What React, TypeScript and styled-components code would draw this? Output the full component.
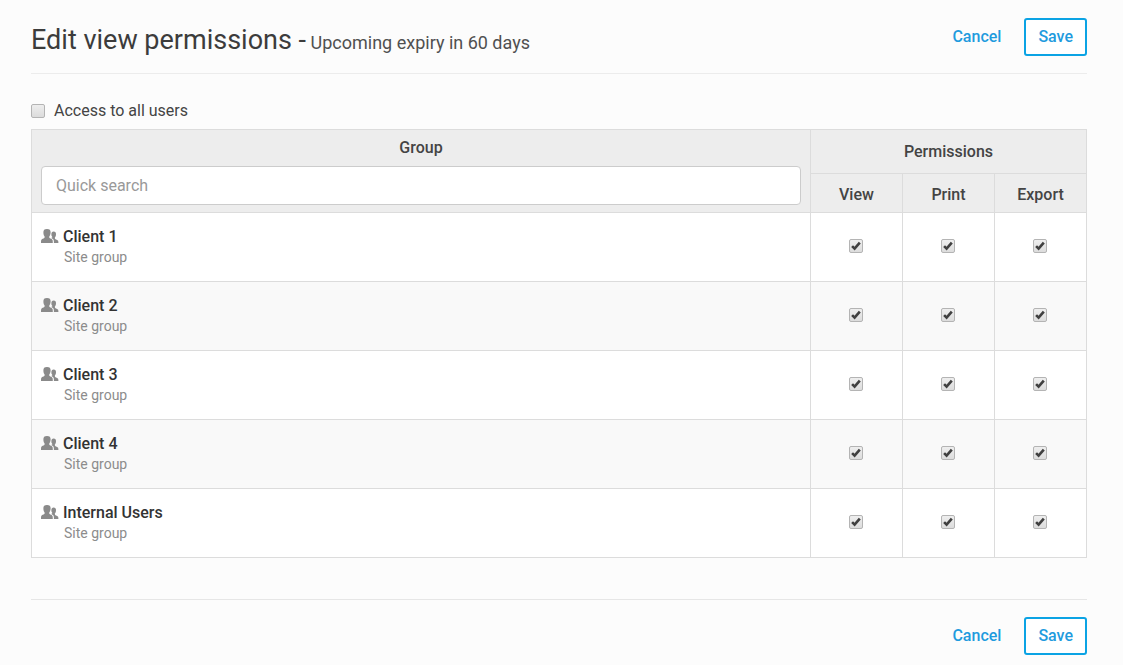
import React, { useState } from "react";
import styled, { createGlobalStyle } from "styled-components";

const GlobalStyle = createGlobalStyle`
  *, *::before, *::after { box-sizing: border-box; }
  body {
    margin: 0;
    background: #fcfcfc;
    color: #444;
    font-family: Roboto, "Liberation Sans", sans-serif;
    font-size: 16px;
    line-height: 20px;
  }
`;

const Page = styled.main`
  padding: 18px 36px 10px 31px;
`;

const Header = styled.header`
  display: flex;
  align-items: flex-start;
  justify-content: space-between;
  height: 56px;
  border-bottom: 1px solid #ececec;
`;

const Title = styled.h1`
  margin: 0;
  padding-top: 4px;
  font-size: 27px;
  line-height: 36px;
  font-weight: 400;
  color: #3c3c3c;
`;

const Subtitle = styled.small`
  font-size: 18px;
  color: #505050;
`;

const Actions = styled.div`
  display: flex;
  align-items: center;
  gap: 23px;
`;

const CancelLink = styled.a`
  color: #1f9bde;
  font-weight: 500;
  text-decoration: none;
`;

const SaveButton = styled.button`
  height: 38px;
  padding: 0 12px;
  border: 2px solid #0ba3e4;
  border-radius: 3px;
  background: #fff;
  color: #1f9bde;
  font: inherit;
  font-weight: 500;
  cursor: pointer;
`;

const AccessLabel = styled.label`
  display: flex;
  align-items: center;
  gap: 9px;
  padding: 27px 0 8px;
`;

const Checkbox = styled.input.attrs({ type: "checkbox" })`
  appearance: none;
  display: block;
  flex: none;
  width: 14px;
  height: 14px;
  margin: 0;
  border: 1px solid #b4b4b4;
  border-radius: 2px;
  background: linear-gradient(#eeeeee, #dcdcdc);

  &:checked {
    background:
      url("data:image/svg+xml,%3Csvg xmlns='http://www.w3.org/2000/svg' viewBox='0 0 12 12'%3E%3Cpath d='M2.1 6.2L4.6 8.7L9.8 2.6' fill='none' stroke='%23404040' stroke-width='2.6'/%3E%3C/svg%3E")
        center / 12px 12px no-repeat,
      linear-gradient(#eeeeee, #dcdcdc);
  }
`;

const Table = styled.table`
  width: 100%;
  table-layout: fixed;
  border-collapse: collapse;
  background: #fff;
`;

const PermissionCol = styled.col`
  width: 92px;
`;

const HeadCell = styled.th`
  padding: 4px 0 0;
  border: 1px solid #dcdcdc;
  background: #ededed;
  font-weight: 500;
`;

const GroupHead = styled(HeadCell)`
  padding: 8px 9px 7px;
  vertical-align: top;
`;

const PermissionsHead = styled(HeadCell)`
  height: 44px;
  padding: 0;
`;

const Search = styled.input`
  display: block;
  width: 100%;
  height: 39px;
  margin-top: 8px;
  padding: 0 14px;
  border: 1px solid #cccccc;
  border-radius: 4px;
  background: #fff;
  font: inherit;
  font-weight: 400;
  color: #444;

  &::placeholder {
    color: #999;
    opacity: 1;
  }
`;

const Row = styled.tr`
  height: 69px;

  &:nth-child(even) {
    background: #f9f9f9;
  }
`;

const Cell = styled.td`
  padding: 0 9px;
  border: 1px solid #dcdcdc;
`;

const Group = styled.div`
  display: grid;
  grid-template-columns: 18px 1fr;
  column-gap: 4px;
  align-items: center;
`;

const GroupName = styled.span`
  font-weight: 500;
  color: #333;
`;

const GroupKind = styled.span`
  grid-column: 2;
  padding-left: 1px;
  font-size: 14px;
  color: #8c8c8c;
`;

const CheckWrap = styled.div`
  display: flex;
  justify-content: center;
  padding-bottom: 2px;
`;

const Footer = styled.footer`
  display: flex;
  justify-content: flex-end;
  margin-top: 41px;
  padding-top: 17px;
  border-top: 1px solid #e6e6e6;
`;

const UsersIcon = () => (
  <svg width="18" height="16" viewBox="0 1 18 16" fill="#8a8a8a" aria-hidden="true">
    <path d="M6 1C8.7 1 9.7 2.2 9.6 4.4C9.55 6 9.2 7.1 8.5 8C8.2 8.5 8.2 9.7 8.6 10.1C9.4 10.7 11 11.1 11.5 12C11.8 12.7 11.8 14 11.8 15H0C0 14 0 12.7 0.3 12C0.8 11.1 2.4 10.7 3.3 10.1C3.7 9.7 3.7 8.5 3.4 8C2.7 7.1 2.4 6 2.4 4.4C2.3 2.2 3.3 1 6 1Z" />
    <path d="M12.6 3.4C14.3 3.4 15.1 4.4 15 6.2C14.95 7.5 14.7 8.5 14 9.2C13.7 9.6 13.8 10.5 14.2 10.9C15 11.5 16.6 11.9 17.1 12.8C17.4 13.4 17.4 14.3 17.4 15H12.9C12.9 13.5 12.9 12.4 12.4 11.6C12 10.9 11 10.5 10.1 10C11.1 9.6 11.6 9.3 11.2 8.7C10.5 8 10.3 7.3 10.4 6.4C10.3 4.4 11.1 3.4 12.6 3.4Z" />
  </svg>
);

const groups = ["Client 1", "Client 2", "Client 3", "Client 4", "Internal Users"];
const permissions = ["View", "Print", "Export"];

const FormActions = () => (
  <Actions>
    <CancelLink href="#cancel">Cancel</CancelLink>
    <SaveButton type="button">Save</SaveButton>
  </Actions>
);

export default function App() {
  const [query, setQuery] = useState("");
  const shown = groups.filter((g) => g.toLowerCase().includes(query.toLowerCase()));

  return (
    <>
      <GlobalStyle />
      <Page>
        <Header>
          <Title>
            Edit view permissions -<Subtitle> Upcoming expiry in 60 days</Subtitle>
          </Title>
          <FormActions />
        </Header>

        <AccessLabel>
          <Checkbox />
          Access to all users
        </AccessLabel>

        <Table>
          <colgroup>
            <col />
            {permissions.map((p) => (
              <PermissionCol key={p} />
            ))}
          </colgroup>
          <thead>
            <tr>
              <GroupHead rowSpan={2} scope="col">
                Group
                <Search
                  type="text"
                  placeholder="Quick search"
                  aria-label="Quick search"
                  value={query}
                  onChange={(e) => setQuery(e.target.value)}
                />
              </GroupHead>
              <PermissionsHead colSpan={3} scope="colgroup">
                Permissions
              </PermissionsHead>
            </tr>
            <tr>
              {permissions.map((p) => (
                <HeadCell key={p} scope="col">
                  {p}
                </HeadCell>
              ))}
            </tr>
          </thead>
          <tbody>
            {shown.map((group) => (
              <Row key={group}>
                <Cell>
                  <Group>
                    <UsersIcon />
                    <GroupName>{group}</GroupName>
                    <GroupKind>Site group</GroupKind>
                  </Group>
                </Cell>
                {permissions.map((p) => (
                  <Cell key={p}>
                    <CheckWrap>
                      <Checkbox defaultChecked aria-label={`${p} permission for ${group}`} />
                    </CheckWrap>
                  </Cell>
                ))}
              </Row>
            ))}
          </tbody>
        </Table>

        <Footer>
          <FormActions />
        </Footer>
      </Page>
    </>
  );
}
